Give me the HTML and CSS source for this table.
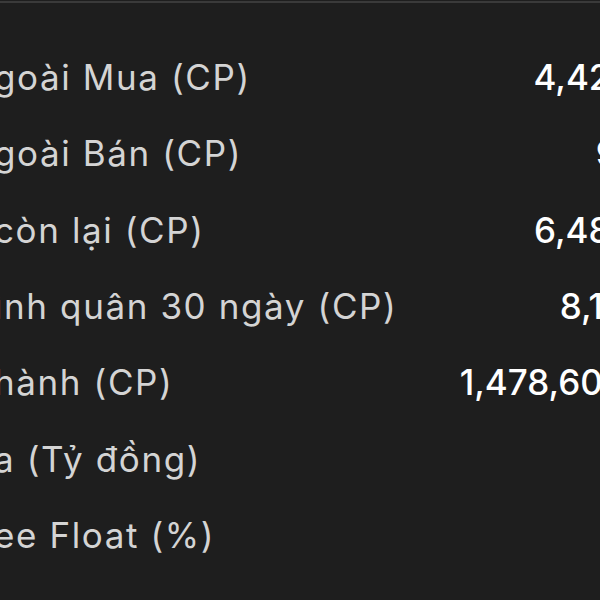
FILE: index.html
```html
<!DOCTYPE html>
<html lang="vi">
<head>
<meta charset="utf-8">
<link rel="stylesheet" href="styles.css">
</head>
<body>
<div class="panel">
  <div class="row"><span class="label">goài Mua (CP)</span><span class="value">4,421,500</span></div>
  <div class="row"><span class="label">goài Bán (CP)</span><span class="value">91,410</span></div>
  <div class="row"><span class="label">còn lại (CP)</span><span class="value">6,481,300</span></div>
  <div class="row"><span class="label">ình quân 30 ngày (CP)</span><span class="value">8,111,410</span></div>
  <div class="row"><span class="label">hành (CP)</span><span class="value">1,478,600,000</span></div>
  <div class="row"><span class="label">a (Tỷ đồng)</span><span class="value">5,432</span></div>
  <div class="row"><span class="label">ee Float (%)</span><span class="value">35.5</span></div>
</div>
</body>
</html>
```
FILE: styles.css
```css
html, body {
  margin: 0;
  padding: 0;
  background: #1e1e1e;
  overflow: hidden;
  width: 600px;
  height: 600px;
}
body {
  padding-top: 1px;
  box-sizing: border-box;
}
.panel {
  border-top: 2px solid #3a3a3a;
  margin-left: -6px;
  width: 708px;
  padding-top: 36px;
  font-family: Inter, "Noto Sans", sans-serif;
  font-size: 35px;
}
.row {
  display: flex;
  justify-content: space-between;
  align-items: center;
  height: 76.3px;
  white-space: nowrap;
}
.label {
  color: #d4d4d4;
  font-weight: 400;
  letter-spacing: 1.6px;
}
.value {
  color: #ffffff;
  font-weight: 500;
}
```
